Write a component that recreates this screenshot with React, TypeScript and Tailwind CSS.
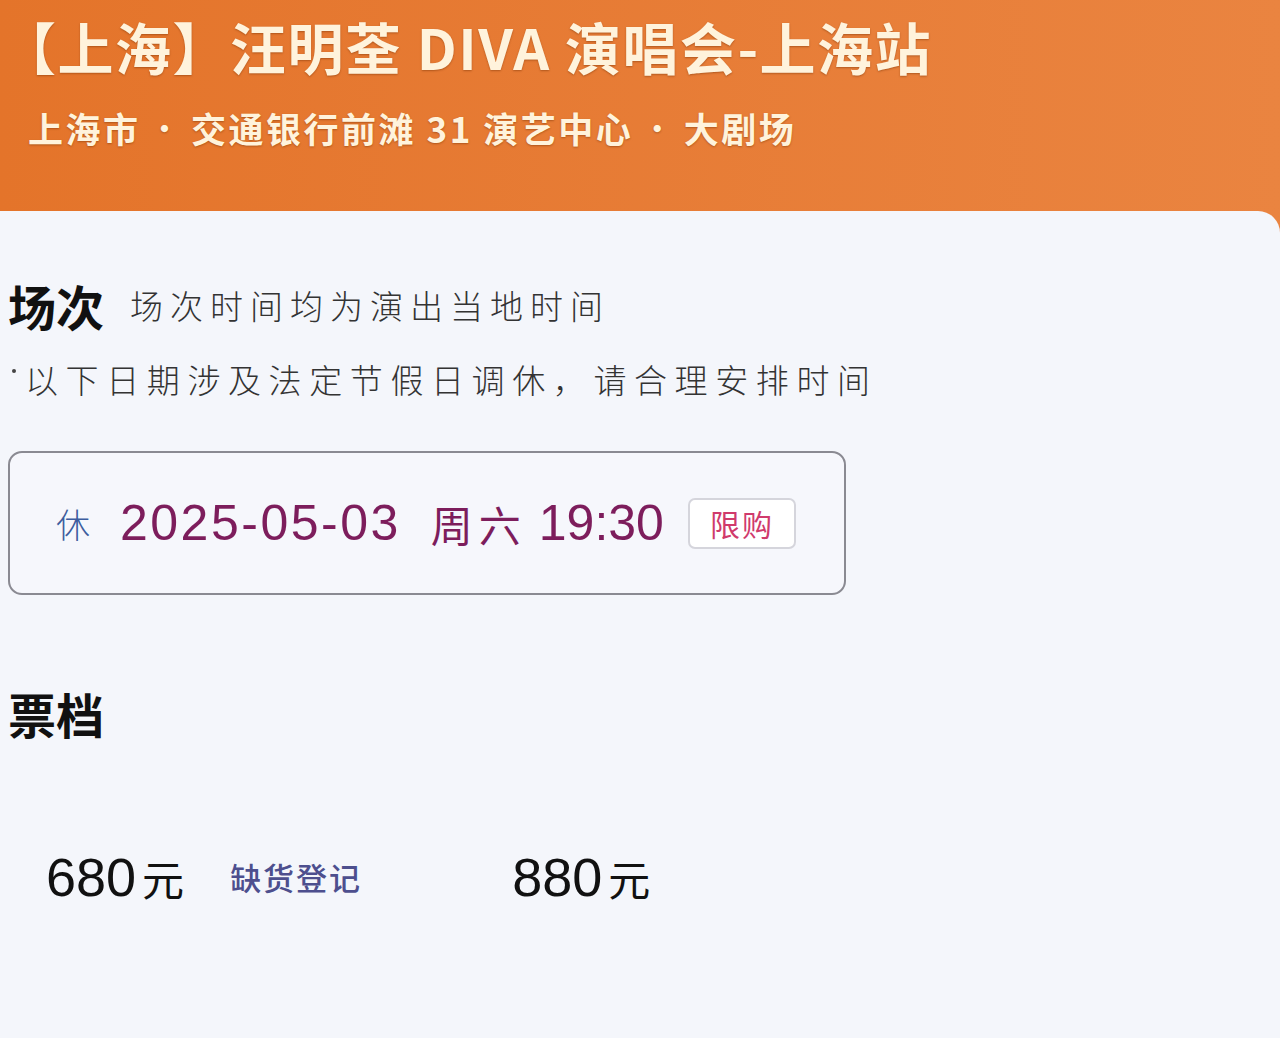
import React from "react";

const cjk = "font-['Noto_Sans_CJK_SC','Noto_Sans',sans-serif]";
const num = "font-['Liberation_Sans','Noto_Sans_CJK_SC',sans-serif]";

export default function App() {
  return (
    <div className={`w-[1280px] h-[1038px] overflow-hidden bg-gradient-to-r from-[#e4742a] to-[#ea8440] ${cjk}`}>
      {/* header */}
      <div className="h-[211px] pt-[14px] text-[#fff3dc] [text-shadow:0_1px_2px_rgba(110,45,0,0.45)]">
        <h1 className="text-[56px] leading-[64px] font-bold tracking-[1.5px] whitespace-nowrap">
          【上海】汪明荃 DIVA 演唱会-上海站
        </h1>
        <div className="mt-[28px] ml-[28px] flex items-center text-[35px] leading-[44px] font-bold tracking-[2.5px] whitespace-nowrap">
          <span>上海市</span>
          <span className="mx-[10px] text-[28px]">·</span>
          <span>交通银行前滩 31 演艺中心</span>
          <span className="mx-[10px] text-[28px]">·</span>
          <span>大剧场</span>
        </div>
      </div>

      {/* card */}
      <div className="h-[827px] bg-[#f4f6fb] rounded-tr-[22px] pl-[8px]">
        <div className="pt-[66px] flex items-center gap-[26px]">
          <span className="text-[48px] leading-[56px] font-bold text-[#111]">场次</span>
          <span className="text-[33px] leading-[44px] tracking-[7px] text-[#333] font-light">场次时间均为演出当地时间</span>
        </div>
        <div className="mt-[24px] ml-[4px] flex items-start text-[#333] font-light">
          <span className="mt-[12px] mr-[9px] w-[4px] h-[4px] rounded-full bg-[#444]" />
          <span className="text-[33px] leading-[44px] tracking-[7.6px]">以下日期涉及法定节假日调休，请合理安排时间</span>
        </div>

        <div className="mt-[50px] w-[838px] h-[144px] rounded-[14px] border-2 border-[#8a8a92] bg-[#f6f7fc] flex items-center pl-[46px]">
          <span className="text-[34px] text-[#3d5d9e] font-light mr-[30px]">休</span>
          <span className={`${num} text-[50px] tracking-[2.5px] text-[#7d1d5c]`}>2025-05-03</span>
          <span className="ml-[30px] text-[42px] tracking-[6px] text-[#7d1d5c]">周六</span>
          <span className={`${num} ml-[12px] text-[50px] text-[#7d1d5c]`}>19:30</span>
          <span className="ml-[24px] w-[108px] h-[51px] rounded-[7px] border-2 border-[#d5d5dc] bg-white flex items-center justify-center text-[30px] tracking-[2px] text-[#d03a6c]">
            限购
          </span>
        </div>

        <div className="mt-[90px] text-[48px] leading-[56px] font-bold text-[#111]">票档</div>

        <div className="mt-[96px] flex items-center pl-[38px]">
          <span className={`${num} text-[54px] text-[#111]`}>680</span>
          <span className="ml-[6px] text-[42px] text-[#111]">元</span>
          <span className="ml-[46px] text-[31px] font-medium tracking-[2px] text-[#4d4f8e]">缺货登记</span>
          <span className={`${num} ml-[150px] text-[54px] text-[#111]`}>880</span>
          <span className="ml-[6px] text-[42px] text-[#111]">元</span>
        </div>
      </div>
    </div>
  );
}
